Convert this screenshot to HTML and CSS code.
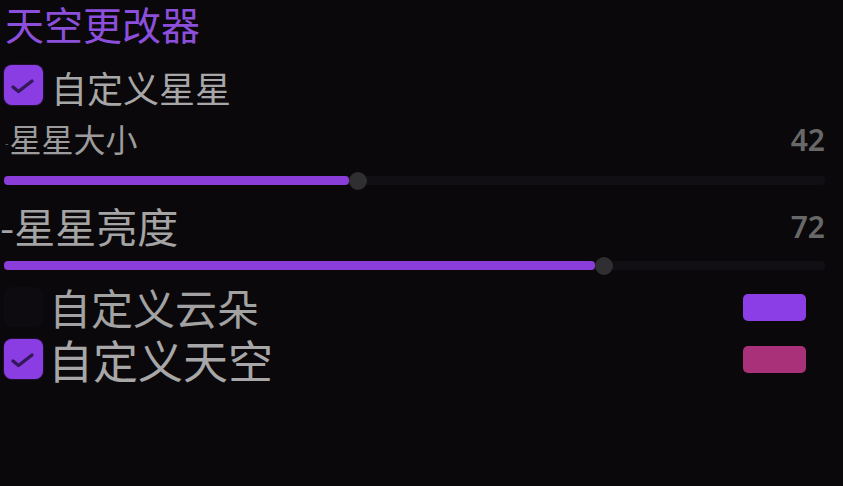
FILE: index.html
```html
<!DOCTYPE html>
<html lang="zh-CN">
<head>
<meta charset="utf-8">
<title>天空更改器</title>
<link rel="stylesheet" href="styles.css">
</head>
<body>
<div class="panel">
  <div class="title">天空更改器</div>

  <div class="check-row row-stars">
    <span class="box checked">
      <svg viewBox="0 0 39 40" width="39" height="40"><path d="M9 22 L14.5 26.5 L28 16" fill="none" stroke="#34195a" stroke-width="3.4" stroke-linecap="round" stroke-linejoin="round"/></svg>
    </span>
    <span class="label label-stars">自定义星星</span>
  </div>

  <div class="value-row row-size">
    <span class="name name-size"><span class="tiny">-</span>星星大小</span>
    <span class="num">42</span>
  </div>
  <div class="slider row-s1">
    <div class="track">
      <div class="fill" style="width:42%"><span class="knob"></span></div>
    </div>
  </div>

  <div class="value-row row-bright">
    <span class="name name-bright">-星星亮度</span>
    <span class="num">72</span>
  </div>
  <div class="slider row-s2">
    <div class="track">
      <div class="fill" style="width:72%"><span class="knob"></span></div>
    </div>
  </div>

  <div class="check-row row-cloud">
    <span class="box"></span>
    <span class="label label-cloud">自定义云朵</span>
    <span class="swatch swatch-purple"></span>
  </div>

  <div class="check-row row-sky">
    <span class="box checked">
      <svg viewBox="0 0 39 40" width="39" height="40"><path d="M9 22 L14.5 26.5 L28 16" fill="none" stroke="#34195a" stroke-width="3.4" stroke-linecap="round" stroke-linejoin="round"/></svg>
    </span>
    <span class="label label-sky">自定义天空</span>
    <span class="swatch swatch-pink"></span>
  </div>
</div>
</body>
</html>
```

FILE: styles.css
```css
html, body {
  margin: 0;
  padding: 0;
  background: #0a080b;
  height: 100%;
}
body {
  font-family: "Noto Sans CJK SC", "Noto Sans", sans-serif;
  color: #a6a6a6;
}
.panel {
  width: 821px;
  padding: 2px 4px 0;
  display: flex;
  flex-direction: column;
}
.title {
  height: 42px;
  line-height: 42px;
  font-size: 39px;
  color: #8c4fdb;
  margin-left: 1px;
}
.check-row {
  display: flex;
  align-items: center;
  height: 44px;
}
.row-stars { margin-top: 19px; }
.row-cloud { margin-top: 9px; }
.row-sky { margin-top: 8px; }
.box {
  width: 39px;
  height: 40px;
  border-radius: 8px;
  background: #0d0b0f;
  flex: none;
  display: flex;
}
.box.checked {
  background: #8a3de2;
  box-shadow: 0 0 2px #5a2a90;
}
.label {
  line-height: 40px;
  height: 40px;
  color: #a7a7a7;
}
.label-stars { font-size: 36px; margin-left: 8px; margin-top: 4px; }
.label-cloud { font-size: 42px; margin-left: 6px; color: #a2a2a2; }
.label-sky { font-size: 45px; margin-left: 5px; margin-top: 2px; }
.swatch {
  margin-left: auto;
  margin-right: 19px;
  width: 63px;
  height: 27px;
  border-radius: 5px;
}
.swatch-purple { background: #8b3ee6; }
.swatch-pink { background: #a83179; }
.value-row {
  display: flex;
  align-items: center;
  justify-content: space-between;
  height: 40px;
}
.row-size { margin-top: 11px; }
.row-bright { margin-top: 14px; }
.name {
  line-height: 1;
  color: #9c9c9c;
}
.name-size { font-size: 32px; margin-left: 1px; }
.tiny { font-size: 10px; vertical-align: middle; margin-right: 1px; color: #777; }
.name-bright { font-size: 41px; margin-left: -4px; color: #a4a4a4; }
.num {
  font-family: "Noto Sans", sans-serif;
  font-weight: 600;
  font-size: 30px;
  line-height: 1;
  color: #686868;
  margin-top: 4px;
}
.slider {
  height: 21px;
  display: flex;
  align-items: center;
}
.row-s1 { margin-top: 12px; }
.row-s2 { margin-top: 10px; }
.track {
  position: relative;
  width: 100%;
  height: 9px;
  border-radius: 4px;
  background: #110f13;
}
.fill {
  position: relative;
  height: 100%;
  border-radius: 4px;
  background: #8a3dd9;
}
.knob {
  position: absolute;
  left: 100%;
  top: 50%;
  width: 18px;
  height: 18px;
  margin-top: -9px;
  border-radius: 50%;
  background: #2f2f32;
}
```
